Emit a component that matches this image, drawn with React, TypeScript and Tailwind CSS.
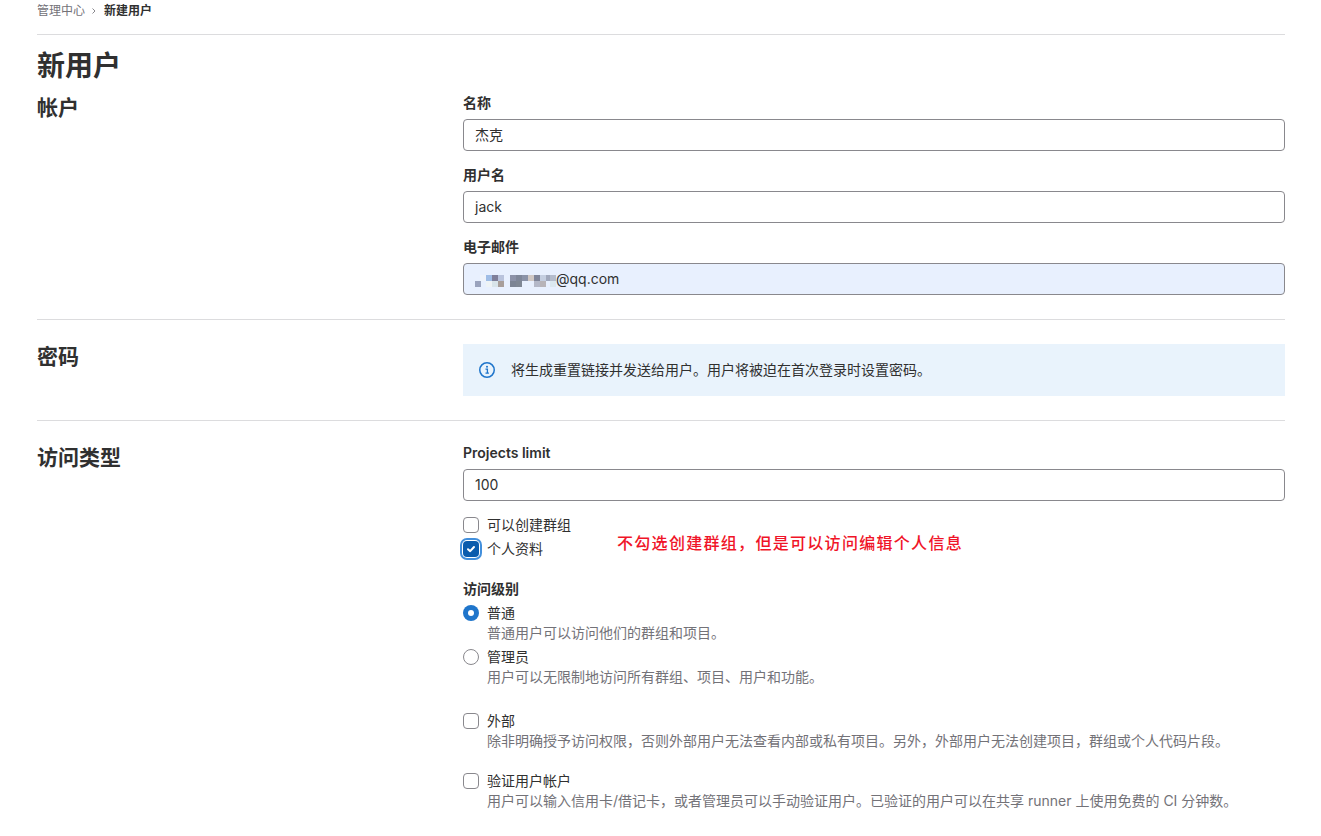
const mosaic = [
  [0, 12, "#9aa3bd"], [5, 6, "#eef3fb"], [11, 6, "#9fbde6"], [17, 6, "#7f7f9a"], [23, 6, "#b9c3dc"],
  [11, 12, "#eef3f6"], [17, 12, "#d8e4ea"], [23, 12, "#a89e9a"],
  [35, 6, "#8c92a8"], [41, 6, "#7f8799"], [47, 6, "#8b93a8"], [53, 6, "#d0c8c4"], [59, 6, "#7f8599"],
  [65, 6, "#c4cee0"], [71, 6, "#a0a8bc"], [75, 6, "#b4bccc"],
  [35, 12, "#7c8494"], [41, 12, "#7f8794"], [59, 12, "#b4b8c8"], [65, 12, "#b8b4b8"], [75, 12, "#dbe8f0"],
];

const Field = ({ label, value }: { label: string; value: string }) => (
  <div className="mb-4">
    <label className="mb-2 block h-4 text-sm leading-4 font-semibold text-[#303030]">{label}</label>
    <div className="flex h-8 items-center rounded border border-[#89888d] bg-white px-[11px] text-sm text-[#303030]">
      {value}
    </div>
  </div>
);

const Box = ({ checked }: { checked?: boolean }) =>
  checked ? (
    <span className="flex h-4 w-4 shrink-0 items-center justify-center rounded bg-[#0b5cad] shadow-[0_0_0_1px_#fff,0_0_0_3px_#428fdc]">
      <svg width="10" height="10" viewBox="0 0 10 10" fill="none">
        <path d="M2 5.2 4.2 7.2 8 3" stroke="#fff" strokeWidth="2" strokeLinecap="round" strokeLinejoin="round" />
      </svg>
    </span>
  ) : (
    <span className="h-4 w-4 shrink-0 rounded border border-[#89888d] bg-white" />
  );

const CheckRow = ({ label, help, checked }: { label: string; help?: string; checked?: boolean }) => (
  <div>
    <div className="flex h-6 items-center gap-2 text-sm text-[#303030]">
      <Box checked={checked} />
      <span>{label}</span>
    </div>
    {help && <p className="ml-6 h-5 text-sm leading-4 text-[#737278]">{help}</p>}
  </div>
);

const RadioRow = ({ label, help, on }: { label: string; help: string; on?: boolean }) => (
  <div className="mb-1">
    <div className="flex h-5 items-center gap-2 text-sm text-[#303030]">
      {on ? (
        <span className="flex h-4 w-4 items-center justify-center rounded-full bg-[#1f75cb]">
          <span className="h-[6px] w-[6px] rounded-full bg-white" />
        </span>
      ) : (
        <span className="h-4 w-4 rounded-full border border-[#89888d] bg-white" />
      )}
      <span>{label}</span>
    </div>
    <p className="ml-6 h-5 text-sm leading-5 text-[#737278]">{help}</p>
  </div>
);

const Section = ({ title, children }: { title: string; children: React.ReactNode }) => (
  <div className="grid grid-cols-[426px_1fr]">
    <h3 className="mt-[1px] text-[21px] leading-6 font-bold text-[#303030]">{title}</h3>
    <div>{children}</div>
  </div>
);

export default function App() {
  return (
    <div
      className="ml-[37px] h-[836px] w-[1248px] overflow-hidden bg-white text-[#303030]"
      style={{ fontFamily: 'Inter, "Noto Sans CJK SC", sans-serif' }}
    >
      <div className="flex h-[35px] items-start border-b border-[#dcdcde] pt-[3px] text-xs leading-4">
        <span className="text-[#737278]">管理中心</span>
        <svg width="8" height="16" viewBox="0 0 8 16" fill="none" className="mx-[5px]">
          <path d="M2.5 5.5 5 8l-2.5 2.5" stroke="#89888d" strokeWidth="1" />
        </svg>
        <span className="ml-[1px] font-semibold">新建用户</span>
      </div>

      <h1 className="mt-[13px] mb-[11px] h-9 text-[28px] leading-9 font-bold">新用户</h1>

      <Section title="帐户">
        <Field label="名称" value="杰克" />
        <Field label="用户名" value="jack" />
        <div className="mb-6">
          <label className="mb-2 block h-4 text-sm leading-4 font-semibold">电子邮件</label>
          <div className="flex h-8 items-center rounded border border-[#89888d] bg-[#e8f0fe] px-[11px] text-sm">
            <svg width="81" height="20" viewBox="0 0 81 20" className="shrink-0">
              {mosaic.map(([x, y, c], i) => (
                <rect key={i} x={x as number} y={y as number} width="6" height="6" fill={c as string} />
              ))}
            </svg>
            <span>@qq.com</span>
          </div>
        </div>
      </Section>

      <div className="border-t border-[#dcdcde] pt-6">
        <Section title="密码">
          <div className="mb-6 flex h-[52px] items-center gap-4 bg-[#e9f3fc] pl-4 text-sm">
            <svg width="16" height="16" viewBox="0 0 16 16" fill="none">
              <circle cx="8" cy="8" r="7.25" stroke="#1f75cb" strokeWidth="1.5" />
              <circle cx="8" cy="4.8" r="1" fill="#1f75cb" />
              <path d="M6.5 7.2H8.4V11M6.5 11.2h3.4" stroke="#1f75cb" strokeWidth="1.3" />
            </svg>
            <span>将生成重置链接并发送给用户。用户将被迫在首次登录时设置密码。</span>
          </div>
        </Section>
      </div>

      <div className="border-t border-[#dcdcde] pt-6">
        <Section title="访问类型">
          <div className="mb-3">
            <label className="mb-2 block h-4 text-sm leading-4 font-semibold">Projects limit</label>
            <div className="flex h-8 items-center rounded border border-[#89888d] px-[11px] text-sm">100</div>
          </div>
          <div className="relative mb-5">
            <CheckRow label="可以创建群组" />
            <CheckRow label="个人资料" checked />
            <span className="absolute top-[18px] left-[154px] text-base leading-6 font-medium tracking-[1.3px] text-[#f01428]">
              不勾选创建群组，但是可以访问编辑个人信息
            </span>
          </div>
          <label className="mb-[6px] block h-4 text-sm leading-4 font-semibold">访问级别</label>
          <RadioRow on label="普通" help="普通用户可以访问他们的群组和项目。" />
          <RadioRow label="管理员" help="用户可以无限制地访问所有群组、项目、用户和功能。" />
          <div className="mt-[22px] mb-4">
            <CheckRow
              label="外部"
              help="除非明确授予访问权限，否则外部用户无法查看内部或私有项目。另外，外部用户无法创建项目，群组或个人代码片段。"
            />
          </div>
          <CheckRow
            label="验证用户帐户"
            help="用户可以输入信用卡/借记卡，或者管理员可以手动验证用户。已验证的用户可以在共享 runner 上使用免费的 CI 分钟数。"
          />
        </Section>
      </div>
    </div>
  );
}
